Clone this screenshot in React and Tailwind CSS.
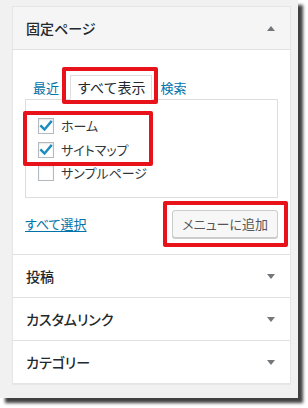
import React from "react";

const Check = () => (
  <svg width="14" height="14" viewBox="0 0 14 14" className="block">
    <path d="M2.2 7.2l3.3 3.3L12 2.8" fill="none" stroke="#1e8cbe" strokeWidth="2.4" strokeLinecap="square" />
  </svg>
);

const Box = ({ checked }) => (
  <span className="w-[16px] h-[16px] border border-[#b4b9be] bg-white shadow-[inset_0_1px_2px_rgba(0,0,0,0.1)] flex items-center justify-center shrink-0">
    {checked ? <Check /> : null}
  </span>
);

const Row = ({ label }) => (
  <div className="h-[43px] border-t border-[#e1e1e1] flex items-center justify-between pl-[13px] pr-[15px]">
    <span className="text-[14px] font-medium text-[#23282d]">{label}</span>
    <span className="w-0 h-0 border-l-[4px] border-r-[4px] border-t-[5px] border-l-transparent border-r-transparent border-t-[#72777c]" />
  </div>
);

export default function App() {
  return (
    <div
      className="relative w-[308px] h-[408px] bg-white overflow-hidden [font-feature-settings:'palt']"
      style={{ fontFamily: '"Noto Sans CJK JP", "Noto Sans", sans-serif' }}
    >
      <div className="w-[298px] h-[398px] bg-[#f1f1f1] shadow-[5px_5px_3px_rgba(0,0,0,0.75)] pt-[6px] pl-[12px]">
        <div className="w-[279px] bg-white border border-[#e5e5e5] shadow-[0_1px_1px_rgba(0,0,0,0.04)]">
          <div className="h-[43px] bg-[#f5f5f5] border-b border-[#e1e1e1] flex items-center justify-between pl-[13px] pr-[15px]">
            <span className="text-[14px] font-medium text-[#23282d]">固定ページ</span>
            <span className="w-0 h-0 border-l-[4px] border-r-[4px] border-b-[5px] border-l-transparent border-r-transparent border-b-[#72777c]" />
          </div>
          <div className="px-[12px] pt-[25px] pb-[16px]">
            <div className="flex items-center h-[24px] text-[13px]">
              <span className="text-[#0073aa] ml-[8px] leading-none">最近</span>
              <span className="ml-[11px] h-[25px] mt-[1px] border border-[#ddd] border-b-white bg-white px-[6px] flex items-center text-[14px] text-[#23282d] z-10 [font-feature-settings:normal]">すべて表示</span>
              <span className="text-[#0073aa] ml-[8px] leading-none">検索</span>
            </div>
            <div className="h-[99px] border border-[#ddd] pl-[12px] pt-[18px] flex flex-col gap-[7.5px] text-[13px] text-[#32373c]">
              <label className="flex items-center gap-[7px] h-[16px]"><Box checked />ホーム</label>
              <label className="flex items-center gap-[7px] h-[16px]"><Box checked />サイトマップ</label>
              <label className="flex items-center gap-[7px] h-[16px]"><Box />サンプルページ</label>
            </div>
            <div className="mt-[12px] flex items-center justify-between">
              <span className="text-[13px] text-[#0073aa] underline underline-offset-2">すべて選択</span>
              <span className="h-[28px] px-[9px] flex items-center border border-[#ccc] bg-[#f7f7f7] rounded-[3px] shadow-[0_1px_0_#ccc] text-[13px] text-[#555]">メニューに追加</span>
            </div>
          </div>
          <Row label="投稿" />
          <Row label="カスタムリンク" />
          <Row label="カテゴリー" />
        </div>
      </div>
      <div className="absolute left-[62px] top-[67px] w-[96px] h-[37px] border-[4px] border-[#e8121b] rounded-[2px]" />
      <div className="absolute left-[23px] top-[111px] w-[130px] h-[55px] border-[4px] border-[#e8121b] rounded-[2px]" />
      <div className="absolute left-[163px] top-[201px] w-[125px] h-[46px] border-[4px] border-[#e8121b] rounded-[2px]" />
    </div>
  );
}
